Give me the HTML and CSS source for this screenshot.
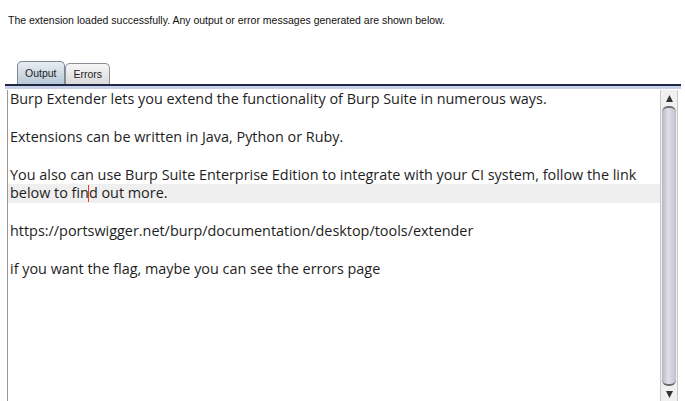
FILE: index.html
```html
<!DOCTYPE html>
<html>
<head>
<meta charset="utf-8">
<link rel="stylesheet" href="styles.css">
</head>
<body>
<div class="status">The extension loaded successfully. Any output or error messages generated are shown below.</div>
<div class="tabs">
  <div class="tab active">Output</div>
  <div class="tab">Errors</div>
</div>
<div class="rule"></div>
<div class="panel">
  <div class="text">
    <div class="line">Burp Extender lets you extend the functionality of Burp Suite in numerous ways.</div>
    <div class="line">&nbsp;</div>
    <div class="line">Extensions can be written in Java, Python or Ruby.</div>
    <div class="line">&nbsp;</div>
    <div class="line">You also can use Burp Suite Enterprise Edition to integrate with your CI system, follow the link</div>
    <div class="line current">below to fin<span class="caret"></span>d out more.</div>
    <div class="line">&nbsp;</div>
    <div class="line">https://portswigger.net/burp/documentation/desktop/tools/extender</div>
    <div class="line">&nbsp;</div>
    <div class="line">if you want the flag, maybe you can see the errors page</div>
  </div>
  <div class="scrollbar">
    <div class="arrow up"><svg width="9" height="9" viewBox="0 0 9 9"><path d="M4.5 1 L8 8 L1 8 Z" fill="#333"/></svg></div>
    <div class="thumb"></div>
    <div class="arrow down"><svg width="9" height="9" viewBox="0 0 9 9"><path d="M1 1 L8 1 L4.5 8 Z" fill="#333"/></svg></div>
  </div>
</div>
</body>
</html>
```
FILE: styles.css
```css
html, body {
  margin: 0;
  padding: 0;
  background: #ffffff;
  overflow: hidden;
}
body {
  width: 685px;
  height: 401px;
  font-family: "Liberation Sans", Arial, sans-serif;
}
.status {
  font-size: 10.5px;
  color: #111;
  padding: 14px 0 0 8px;
  height: 15px;
  line-height: 12px;
}
.tabs {
  display: flex;
  align-items: flex-end;
  margin-top: 32px;
  padding-left: 17px;
  height: 23px;
}
.tab {
  font-size: 10.5px;
  color: #222;
  border: 1px solid #8a8f98;
  border-bottom: none;
  border-radius: 5px 5px 0 0;
  background: linear-gradient(#f6f6f6, #dadada);
  height: 21px;
  line-height: 21px;
  padding: 0 7px 0 8px;
  box-sizing: border-box;
}
.tab.active {
  height: 23px;
  line-height: 23px;
  padding: 0 7px;
  background: linear-gradient(#e8edf2, #b9c9d8);
  border-color: #7d8694;
}
.rule {
  margin-left: 5px;
  margin-right: 4px;
  height: 2px;
  background: #1d2947;
  border-bottom: 3px solid #c9d1e8;
}
.panel {
  display: flex;
  margin-left: 7px;
  margin-right: 7px;
  height: 312px;
  border-left: 1px solid #9a9a9a;
  margin-top: 1px;
}
.text {
  flex: 1;
  font-family: "Open Sans", "Noto Sans", sans-serif;
  font-size: 14.4px;
  color: #1e1e1e;
}
.line {
  height: 18.9px;
  line-height: 18.9px;
  padding-left: 2px;
  white-space: nowrap;
}
.line.current {
  background: #efefef;
}
.caret {
  display: inline-block;
  width: 1px;
  height: 17px;
  background: #e0401c;
  vertical-align: -4px;
  margin: 0 0 0 -1px;
}
.scrollbar {
  width: 16px;
  display: flex;
  flex-direction: column;
  background: #f0f0f0;
  border-left: 1px solid #c8c8c8;
  border-right: 1px solid #c8c8c8;
}
.arrow {
  height: 16px;
  display: flex;
  align-items: center;
  justify-content: center;
}
.thumb {
  flex: 1;
  margin: 0 1px;
  border-radius: 6px;
  background: linear-gradient(90deg, #b8b8c4, #e0e0e8 45%, #c0c0cc);
  border-top: 2px solid #6a6a72;
  border-bottom: 2px solid #6a6a72;
}
```
